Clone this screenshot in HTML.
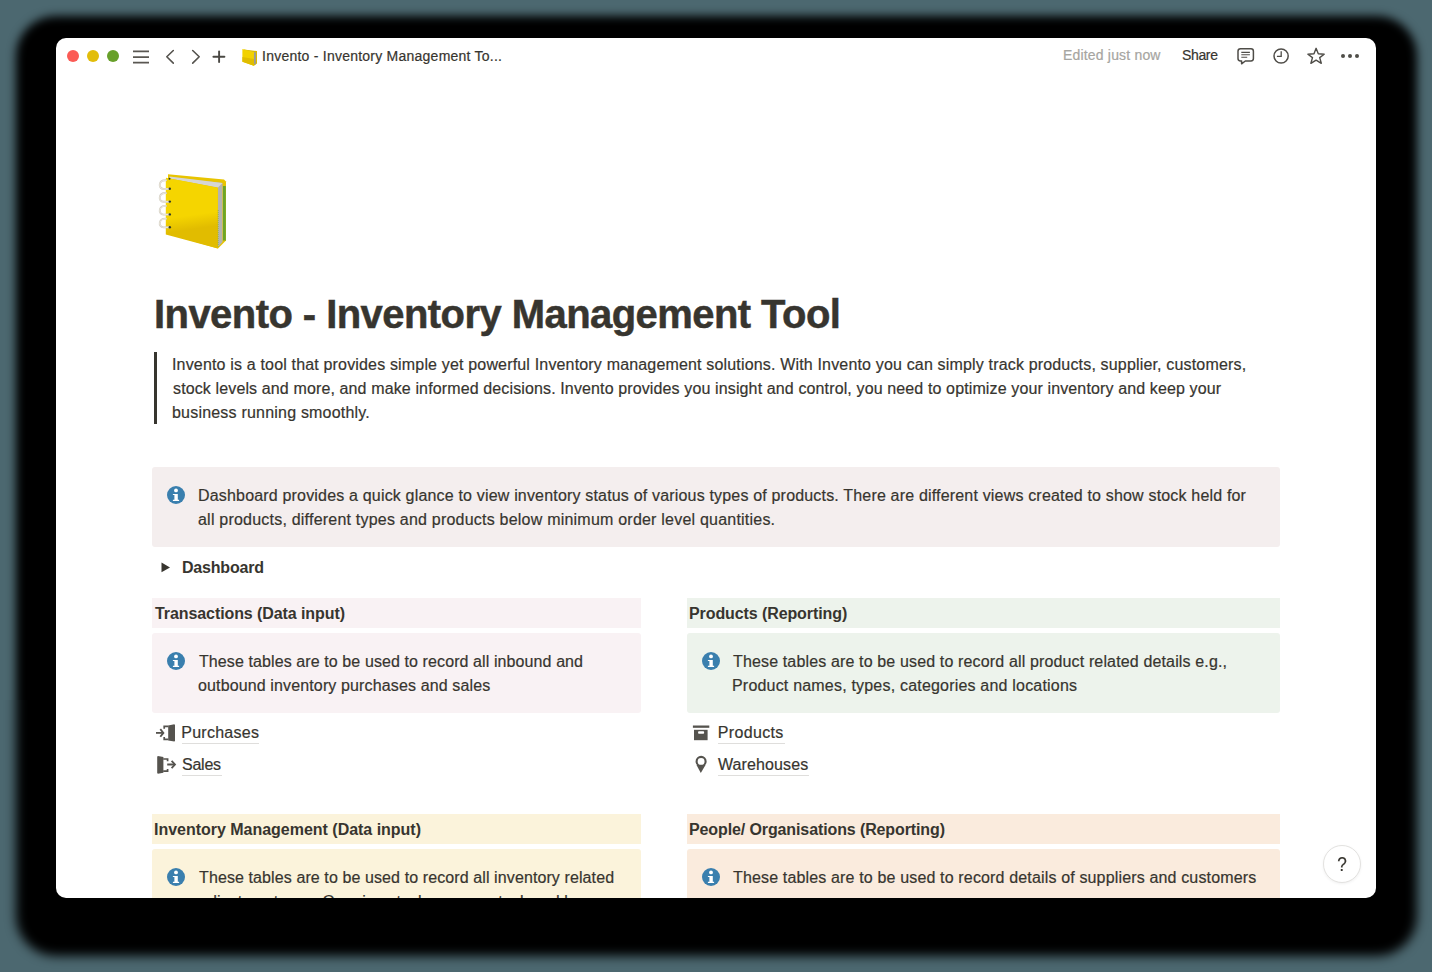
<!DOCTYPE html>
<html>
<head>
<meta charset="utf-8">
<style>
html,body{margin:0;padding:0;}
body{width:1432px;height:972px;background:#4c6870;position:relative;overflow:hidden;font-family:"Liberation Sans",sans-serif;color:#37352f;}
#shadow{position:absolute;left:15.5px;top:16px;width:1401px;height:941px;background:#000;border-radius:40px;filter:blur(4.6px);clip-path:inset(-40px -40px 257px -40px);}
#shadow2{position:absolute;left:15.5px;top:16px;width:1401px;height:940px;background:#000;border-radius:40px;filter:blur(5.2px);clip-path:inset(684px -40px -40px -40px);}
#win{position:absolute;left:56px;top:38px;width:1320px;height:860px;background:#fff;border-radius:10px;overflow:hidden;}
.t{position:absolute;white-space:nowrap;font-size:16px;line-height:24px;color:#37352f;-webkit-text-stroke:0.2px currentColor;}
.bg{position:absolute;border-radius:3px;}
.ul{position:absolute;height:1px;background:#dfdedc;}
svg.ov{position:absolute;left:-56px;top:-38px;}
</style>
</head>
<body>
<div id="shadow"></div>
<div id="shadow2"></div>
<div id="win">
  <div class="bg" style="left:96px;top:429px;width:1128px;height:80px;background:#f4eeee;"></div>
  <div class="bg" style="border-radius:0;left:96px;top:560px;width:489px;height:30px;background:#f9f2f4;"></div>
  <div class="bg" style="left:96px;top:595px;width:489px;height:80px;background:#f9f2f4;"></div>
  <div class="bg" style="border-radius:0;left:631px;top:560px;width:593px;height:30px;background:#edf3ec;"></div>
  <div class="bg" style="left:631px;top:595px;width:593px;height:80px;background:#edf3ec;"></div>
  <div class="bg" style="border-radius:0;left:96px;top:776px;width:489px;height:30px;background:#fbf3db;"></div>
  <div class="bg" style="left:96px;top:811px;width:489px;height:80px;background:#fbf3db;"></div>
  <div class="bg" style="border-radius:0;left:631px;top:776px;width:593px;height:30px;background:#faebdd;"></div>
  <div class="bg" style="left:631px;top:811px;width:593px;height:80px;background:#faebdd;"></div>
  <div style="position:absolute;left:98px;top:314px;width:3px;height:72px;background:#37352f;"></div>
  <div class="ul" style="left:126px;top:705px;width:77px;"></div>
  <div class="ul" style="left:126px;top:737px;width:40px;"></div>
  <div class="ul" style="left:662px;top:705px;width:67px;"></div>
  <div class="ul" style="left:662px;top:737px;width:91px;"></div>
  <div class="t" style="left:206.00px;top:8.00px;letter-spacing:0.239px;font-size:14px;line-height:20px;">Invento - Inventory Management To...</div>
  <div class="t" style="left:1007.00px;top:7.00px;letter-spacing:0.180px;font-size:14px;line-height:20px;color:#a6a5a1;">Edited just now</div>
  <div class="t" style="left:1126.00px;top:7.00px;letter-spacing:-0.350px;font-size:14px;line-height:20px;">Share</div>
  <div class="t" style="left:98.00px;top:252.00px;letter-spacing:-0.562px;font-size:40px;line-height:48px;font-weight:700;-webkit-text-stroke:0.5px currentColor;">Invento - Inventory Management Tool</div>
  <div class="t" style="left:116.00px;top:315.00px;letter-spacing:0.168px;">Invento is a tool that provides simple yet powerful Inventory management solutions. With Invento you can simply track products, supplier, customers,</div>
  <div class="t" style="left:117.00px;top:339.00px;letter-spacing:0.128px;">stock levels and more, and make informed decisions. Invento provides you insight and control, you need to optimize your inventory and keep your</div>
  <div class="t" style="left:116.00px;top:363.00px;letter-spacing:0.204px;">business running smoothly.</div>
  <div class="t" style="left:142.00px;top:446.00px;letter-spacing:0.179px;">Dashboard provides a quick glance to view inventory status of various types of products. There are different views created to show stock held for</div>
  <div class="t" style="left:142.00px;top:470.00px;letter-spacing:0.216px;">all products, different types and products below minimum order level quantities.</div>
  <div class="t" style="left:126.00px;top:518.00px;letter-spacing:-0.200px;font-weight:700;-webkit-text-stroke:0;">Dashboard</div>
  <div class="t" style="left:99.00px;top:564.00px;letter-spacing:-0.085px;font-weight:700;-webkit-text-stroke:0;">Transactions (Data input)</div>
  <div class="t" style="left:143.00px;top:612.00px;letter-spacing:0.098px;">These tables are to be used to record all inbound and</div>
  <div class="t" style="left:142.00px;top:636.00px;letter-spacing:0.132px;">outbound inventory purchases and sales</div>
  <div class="t" style="left:125.20px;top:683.00px;letter-spacing:0.276px;">Purchases</div>
  <div class="t" style="left:126.00px;top:715.00px;letter-spacing:-0.250px;">Sales</div>
  <div class="t" style="left:633.00px;top:564.00px;letter-spacing:-0.094px;font-weight:700;-webkit-text-stroke:0;">Products (Reporting)</div>
  <div class="t" style="left:677.00px;top:612.00px;letter-spacing:0.145px;">These tables are to be used to record all product related details e.g.,</div>
  <div class="t" style="left:676.00px;top:636.00px;letter-spacing:0.196px;">Product names, types, categories and locations</div>
  <div class="t" style="left:661.80px;top:683.00px;letter-spacing:0.329px;">Products</div>
  <div class="t" style="left:662.00px;top:715.00px;letter-spacing:0.108px;">Warehouses</div>
  <div class="t" style="left:98.00px;top:780.00px;letter-spacing:-0.018px;font-weight:700;-webkit-text-stroke:0;">Inventory Management (Data input)</div>
  <div class="t" style="left:143.00px;top:828.00px;letter-spacing:0.102px;">These tables are to be used to record all inventory related</div>
  <div class="t" style="left:143.00px;top:852.00px;letter-spacing:0.102px;">adjustments e.g. Opening stock, excess stock and losses</div>
  <div class="t" style="left:633.00px;top:780.00px;letter-spacing:-0.112px;font-weight:700;-webkit-text-stroke:0;">People/ Organisations (Reporting)</div>
  <div class="t" style="left:677.00px;top:828.00px;letter-spacing:0.154px;">These tables are to be used to record details of suppliers and customers</div>
  <div style="position:absolute;left:1267px;top:807px;width:36px;height:36px;border-radius:50%;border:1px solid #e3e2e0;background:#fff;box-shadow:0 1px 3px rgba(15,15,15,0.06);"></div>
  <div class="t" style="left:1267px;top:813.5px;width:38px;text-align:center;font-size:20px;line-height:24px;transform:scaleX(0.86);">?</div>

<svg class="ov" width="1432" height="972" viewBox="0 0 1432 972">
  <circle cx="73" cy="56" r="6" fill="#fb5b55"/>
  <circle cx="93" cy="56" r="6" fill="#e2bd0a"/>
  <circle cx="113" cy="56" r="6" fill="#68a02a"/>
  <g stroke="#5a5752" stroke-width="1.8" fill="none">
    <line x1="133" y1="51.3" x2="149" y2="51.3"/>
    <line x1="133" y1="57.1" x2="149" y2="57.1"/>
    <line x1="133" y1="62.7" x2="149" y2="62.7"/>
  </g>
  <g stroke="#55534e" stroke-width="1.6" fill="none" stroke-linecap="round" stroke-linejoin="round">
    <polyline points="173.3,50.5 166.8,56.8 173.3,63.1"/>
    <polyline points="192.7,50.5 199.2,56.8 192.7,63.1"/>
  </g>
  <g stroke="#4a4843" stroke-width="1.9" fill="none" stroke-linecap="round">
    <line x1="213.4" y1="56.8" x2="224.4" y2="56.8"/>
    <line x1="219.1" y1="51.5" x2="219.1" y2="62.1"/>
  </g>
  <!-- small notebook -->
  <g>
    <polygon points="244,49.5 257,51 257,63.5 254,65.7 244,61.5" fill="#d9b800"/>
    <polygon points="244,50 255.8,52.5 255.8,64.5 244,61" fill="#9a9a9a"/>
    <polygon points="242.4,49 254,52 253.8,65.7 242.4,61.8" fill="#f2d200"/>
    <polygon points="242.4,57 254,59 253.8,65.7 242.4,61.8" fill="#e0bd00"/>
  </g>
  <!-- comment -->
  <g stroke="#4f4d48" stroke-width="1.5" fill="none" stroke-linejoin="round">
    <path d="M1240.5,48.8 H1251 Q1253.4,48.8 1253.4,51.2 V58.6 Q1253.4,61 1251,61 H1245.3 L1241.6,63.8 V61 H1240.5 Q1238,61 1238,58.6 V51.2 Q1238,48.8 1240.5,48.8 Z"/>
    <line x1="1241.3" y1="52.4" x2="1249.9" y2="52.4" stroke-width="1.1"/>
    <line x1="1241.3" y1="54.8" x2="1249.9" y2="54.8" stroke-width="1.1"/>
    <line x1="1241.3" y1="57.3" x2="1247.2" y2="57.3" stroke-width="1.1"/>
  </g>
  <!-- clock -->
  <g stroke="#4f4d48" stroke-width="1.5" fill="none">
    <circle cx="1281.1" cy="56" r="7.1"/>
    <polyline points="1281.2,51.2 1281.2,56.3 1276.9,56.3" stroke-width="1.3"/>
  </g>
  <!-- star -->
  <polygon points="1316.1,48.3 1318.3,53.7 1324.2,54.2 1319.7,57.6 1321.3,63.3 1316.1,60.1 1310.9,63.3 1312.5,57.6 1307.9,54.2 1314,53.7" fill="none" stroke="#4f4d48" stroke-width="1.4" stroke-linejoin="round"/>
  <!-- dots -->
  <g fill="#4f4d48">
    <circle cx="1343" cy="56" r="2"/>
    <circle cx="1350" cy="56" r="2"/>
    <circle cx="1357" cy="56" r="2"/>
  </g>
  <!-- big notebook -->
  <defs>
    <linearGradient id="nbg" gradientUnits="userSpaceOnUse" x1="192" y1="215" x2="194" y2="229">
      <stop offset="0" stop-color="#f5d500"/>
      <stop offset="1" stop-color="#e1bc00"/>
    </linearGradient>
  </defs>
  <g>
    <polygon points="168,174.3 224,179.5 226,181.5 226,240.5 218,248.5 168,234" fill="#e8c400"/>
    <rect x="223" y="186" width="2.8" height="54.5" fill="#6aa52a"/>
    <polygon points="169.5,177 222.5,183 222.5,242 218,247 218,187.5" fill="#b4b3b0"/>
    <polygon points="169.5,176.5 222.5,183 218,187.5 169.5,178.5" fill="#d6d6d4"/>
    <path d="M165.8,179 Q165.8,177.6 167.3,177.9 L217.8,187.8 V248.5 L165.8,234.6 Z" fill="url(#nbg)"/>
    <line x1="218.2" y1="210" x2="218.2" y2="248" stroke="#8fb43a" stroke-width="0.8" stroke-dasharray="1,1"/>
    <g fill="none" stroke="#d2cdc0" stroke-width="1.9" stroke-linecap="round">
      <path d="M166,180.3 C158.5,179.8 157.8,188.6 163.5,189 L169.2,188.9"/>
      <path d="M166,193.1 C158.5,192.6 157.8,201.4 163.5,201.8 L169.2,201.7"/>
      <path d="M166,205.9 C158.5,205.4 157.8,214.2 163.5,214.6 L169.2,214.5"/>
      <path d="M166,218.7 C158.5,218.2 157.8,227 163.5,227.4 L169.2,227.3"/>
    </g>
    <g fill="none" stroke="#f3efe6" stroke-width="0.8" stroke-linecap="round">
      <path d="M166,180.3 C158.5,179.8 157.8,188.6 163.5,189 L169.2,188.9"/>
      <path d="M166,193.1 C158.5,192.6 157.8,201.4 163.5,201.8 L169.2,201.7"/>
      <path d="M166,205.9 C158.5,205.4 157.8,214.2 163.5,214.6 L169.2,214.5"/>
      <path d="M166,218.7 C158.5,218.2 157.8,227 163.5,227.4 L169.2,227.3"/>
    </g>
    <g fill="#2f3b28">
      <circle cx="169.8" cy="188.8" r="1.2"/>
      <circle cx="169.8" cy="201.6" r="1.2"/>
      <circle cx="169.8" cy="214.4" r="1.2"/>
      <circle cx="169.8" cy="227.2" r="1.2"/>
    </g>
    <circle cx="169.5" cy="178.8" r="1" fill="#2f3b28"/>
  </g>
  <!-- info icons -->
  <defs>
    <g id="info">
      <circle cx="0" cy="0" r="9" fill="#3a7fae"/>
      <circle cx="0" cy="-4.6" r="1.9" fill="#fff"/>
      <path d="M-3.1,-1.1 H1.8 V4.8 H3.1 V6 H-3.1 V4.8 H-1.6 V0.1 H-3.1 Z" fill="#fff"/>
    </g>
  </defs>
  <use href="#info" x="176" y="495"/>
  <use href="#info" x="176" y="661"/>
  <use href="#info" x="711" y="661"/>
  <use href="#info" x="176" y="877"/>
  <use href="#info" x="711" y="877"/>
  <!-- toggle triangle -->
  <polygon points="161.5,562.5 170,567.4 161.5,572.3" fill="#37352f"/>
  <!-- purchases (enter) -->
  <polygon points="168.2,725.4 174.3,724.2 175,724.9 175,741 174.3,741.6 168.2,740.4" fill="#55534e"/>
  <g stroke="#55534e" stroke-width="1.7" fill="none" stroke-linejoin="miter">
    <polyline points="168.4,726.3 164.2,726.3 164.2,728.8"/>
    <polyline points="168.4,739.4 164.2,739.4 164.2,737"/>
    <line x1="156" y1="732.9" x2="162.6" y2="732.9" stroke-width="1.8"/>
    <polyline points="160.3,729.1 163.4,732.9 160.3,736.7" stroke-width="1.8"/>
  </g>
  <!-- sales (exit) -->
  <polygon points="157.9,756.1 163.4,757.1 163.4,772.7 157.9,773.7 157.2,773 157.2,756.8" fill="#55534e"/>
  <g stroke="#55534e" stroke-width="1.7" fill="none">
    <polyline points="163.2,759 167.6,759 167.6,761.3"/>
    <polyline points="163.2,771.2 167.6,771.2 167.6,768.9"/>
    <line x1="167.2" y1="764.5" x2="174.6" y2="764.5" stroke-width="1.8"/>
    <polyline points="171.6,760.9 175,764.5 171.6,768.1" stroke-width="1.8"/>
  </g>
  <!-- products box -->
  <g fill="#55534e">
    <rect x="692.9" y="725.5" width="16.4" height="2.3"/>
    <rect x="694" y="729.8" width="13.6" height="10.4"/>
  </g>
  <rect x="698.1" y="731.2" width="6" height="2.6" rx="0.8" fill="#fff"/>
  <!-- pin -->
  <circle cx="701.1" cy="761.4" r="4.5" fill="none" stroke="#55534e" stroke-width="2.1"/>
  <polygon points="696.5,765 705.5,765 700.8,773" fill="#55534e"/>
</svg>
</div>
</body>
</html>
